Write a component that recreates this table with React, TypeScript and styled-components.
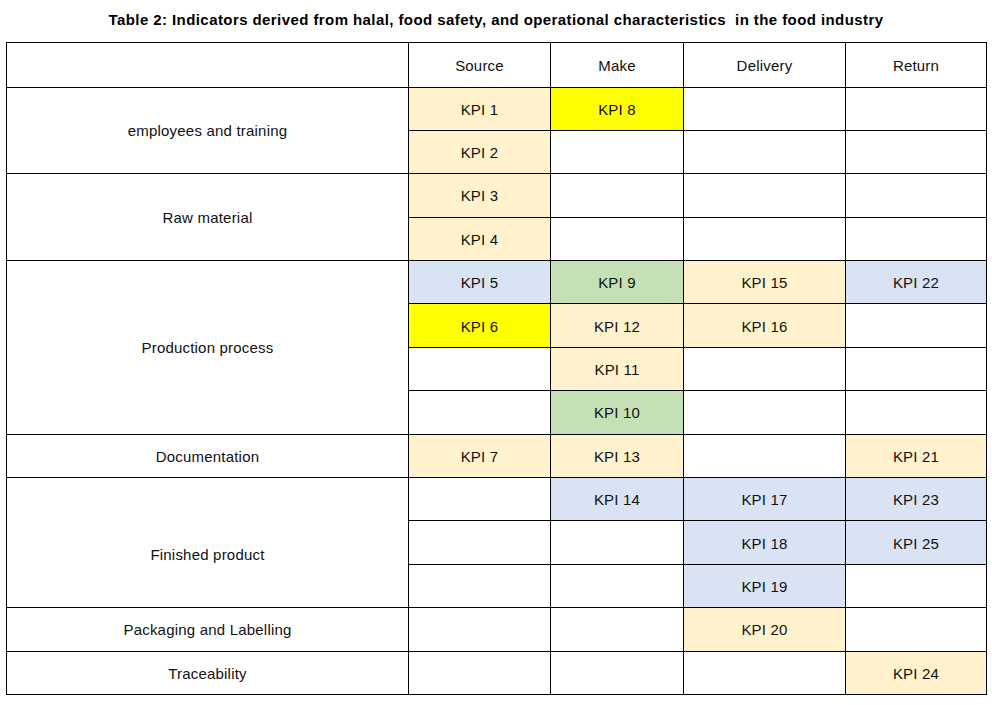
import React from "react";
import styled, { createGlobalStyle } from "styled-components";

const GlobalStyle = createGlobalStyle`
  html, body {
    margin: 0;
    padding: 0;
    background: #ffffff;
  }
  body {
    font-family: "Liberation Sans", Arial, sans-serif;
    color: #111111;
  }
`;

type Tone = "none" | "orange" | "yellow" | "blue" | "green";

const tones: Record<Tone, string> = {
  none: "#ffffff",
  orange: "#fff2cc",
  yellow: "#ffff00",
  blue: "#dae3f3",
  green: "#c5e0b4",
};

const Page = styled.div`
  width: 992px;
  padding-top: 11px;
`;

const Title = styled.h1`
  margin: 0 0 13px;
  text-align: center;
  font-size: 15px;
  font-weight: 700;
  letter-spacing: 0.42px;
  line-height: 18px;
  color: #000000;
  white-space: pre;
`;

const Table = styled.table`
  margin: 0 0 0 6px;
  width: 980px;
  border-collapse: collapse;
  table-layout: fixed;
`;

const Row = styled.tr<{ $head?: boolean }>`
  height: ${(p) => (p.$head ? "44.5px" : "43.4px")};
`;

const Cell = styled.td<{ $tone?: Tone; $shift?: number }>`
  border: 1px solid #000000;
  padding: ${(p) => (p.$shift ? `${p.$shift}px 0 0` : "1px 0 0")};
  text-align: center;
  vertical-align: middle;
  font-size: 15px;
  letter-spacing: 0.2px;
  color: #111111;
  background: ${(p) => tones[p.$tone || "none"]};
  background-clip: padding-box;
`;

type Kpi = [string, Tone] | null;

interface Group {
  label: string;
  shift?: number;
  rows: Kpi[][];
}

const groups: Group[] = [
  {
    label: "employees and training",
    rows: [
      [["KPI 1", "orange"], ["KPI 8", "yellow"], null, null],
      [["KPI 2", "orange"], null, null, null],
    ],
  },
  {
    label: "Raw material",
    rows: [
      [["KPI 3", "orange"], null, null, null],
      [["KPI 4", "orange"], null, null, null],
    ],
  },
  {
    label: "Production process",
    rows: [
      [["KPI 5", "blue"], ["KPI 9", "green"], ["KPI 15", "orange"], ["KPI 22", "blue"]],
      [["KPI 6", "yellow"], ["KPI 12", "orange"], ["KPI 16", "orange"], null],
      [null, ["KPI 11", "orange"], null, null],
      [null, ["KPI 10", "green"], null, null],
    ],
  },
  {
    label: "Documentation",
    rows: [[["KPI 7", "orange"], ["KPI 13", "orange"], null, ["KPI 21", "orange"]]],
  },
  {
    label: "Finished product",
    shift: 24,
    rows: [
      [null, ["KPI 14", "blue"], ["KPI 17", "blue"], ["KPI 23", "blue"]],
      [null, null, ["KPI 18", "blue"], ["KPI 25", "blue"]],
      [null, null, ["KPI 19", "blue"], null],
    ],
  },
  {
    label: "Packaging and Labelling",
    rows: [[null, null, ["KPI 20", "orange"], null]],
  },
  {
    label: "Traceability",
    rows: [[null, null, null, ["KPI 24", "orange"]]],
  },
];

const App = () => {
  return (
    <>
      <GlobalStyle />
      <Page>
        <Title>
          Table 2: Indicators derived from halal, food safety, and operational characteristics  in the food industry
        </Title>
        <Table>
          <colgroup>
            <col style={{ width: 402 }} />
            <col style={{ width: 142 }} />
            <col style={{ width: 133 }} />
            <col style={{ width: 162 }} />
            <col style={{ width: 141 }} />
          </colgroup>
          <tbody>
            <Row $head>
              <Cell />
              <Cell>Source</Cell>
              <Cell>Make</Cell>
              <Cell>Delivery</Cell>
              <Cell>Return</Cell>
            </Row>
            {groups.map((g) =>
              g.rows.map((r, i) => (
                <Row key={g.label + i}>
                  {i === 0 && (
                    <Cell rowSpan={g.rows.length} $shift={g.shift}>
                      {g.label}
                    </Cell>
                  )}
                  {r.map((k, j) => (
                    <Cell key={j} $tone={k ? k[1] : "none"}>
                      {k ? k[0] : ""}
                    </Cell>
                  ))}
                </Row>
              ))
            )}
          </tbody>
        </Table>
      </Page>
    </>
  );
};

export default App;
